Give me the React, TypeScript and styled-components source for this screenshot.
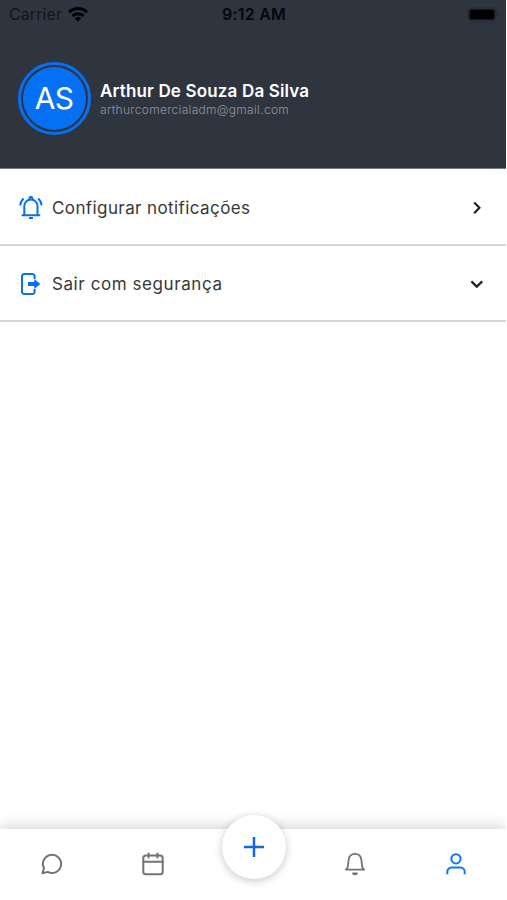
import React from 'react';
import styled, { createGlobalStyle } from 'styled-components';

const BLUE = '#0670f5';
const DARK = '#2e353f';

const GlobalStyle = createGlobalStyle`
  * { box-sizing: border-box; }
  body { margin: 0; background: #fff; font-family: Inter, sans-serif; }
  button { border: 0; padding: 0; background: none; font: inherit; cursor: pointer; }
  svg { display: block; flex: none; }
`;

const Screen = styled.div`
  width: 506px;
  height: 900px;
  display: flex;
  flex-direction: column;
  overflow: hidden;
  background: #fff;
`;

const Header = styled.header`
  height: 169px;
  flex: none;
  background: ${DARK};
  border-bottom: 1px solid #777b82;
`;

const StatusBar = styled.div`
  height: 30px;
  padding: 0 7px 2px 9px;
  display: grid;
  grid-template-columns: 1fr auto 1fr;
  align-items: center;
  color: #05070b;
  font-size: 16px;
  line-height: 20px;
`;

const Carrier = styled.div`
  display: flex;
  align-items: center;
  gap: 6px;
  letter-spacing: 0.1px;
  color: #11151c;
`;

const Clock = styled.div`
  font-weight: 600;
  letter-spacing: 0.2px;
`;

const Battery = styled.div`
  justify-self: end;
`;

const Profile = styled.div`
  display: flex;
  align-items: center;
  padding: 32px 18px 0;
  gap: 9px;
`;

const Avatar = styled.div`
  width: 73px;
  height: 73px;
  border: 3px solid ${BLUE};
  border-radius: 50%;
  padding: 2px;
  display: flex;
`;

const Initials = styled.div`
  flex: 1;
  border-radius: 50%;
  background: ${BLUE};
  color: #fff;
  font-size: 30px;
  letter-spacing: -0.6px;
  padding: 0 1px 2px 0;
  display: flex;
  align-items: center;
  justify-content: center;
`;

const Identity = styled.div`
  display: flex;
  flex-direction: column;
  padding-top: 3px;
  white-space: nowrap;
`;

const Name = styled.div`
  color: #fff;
  font-size: 17px;
  line-height: 20px;
  letter-spacing: 0.16px;
  font-weight: 600;
`;

const Email = styled.div`
  color: #92969e;
  font-size: 12px;
  line-height: 18px;
  letter-spacing: 0.3px;
  font-weight: 300;
`;

const List = styled.main`
  flex: 1;
  display: flex;
  flex-direction: column;
  padding-top: 1px;
`;

const Item = styled.button`
  height: 76px;
  flex: none;
  display: flex;
  align-items: center;
  padding: 1px 17px 0 19px;
  border-bottom: 2px solid #d1d7d9;
  color: #383838;
  text-align: left;
`;

const ItemLabel = styled.span<{ $tracking: number }>`
  flex: 1;
  margin-left: 9px;
  font-size: 17px;
  line-height: 24px;
  letter-spacing: ${({ $tracking }) => $tracking}px;
`;

const TabBar = styled.nav`
  height: 71px;
  flex: none;
  display: grid;
  grid-template-columns: repeat(5, 1fr);
  background: #fff;
  box-shadow: 0 -2px 14px rgba(0, 0, 0, 0.19);
`;

const Tab = styled.button<{ $active?: boolean }>`
  height: 70px;
  display: flex;
  align-items: center;
  justify-content: center;
  padding-left: 2px;
  color: ${({ $active }) => ($active ? '#1974e8' : '#737373')};
`;

const AddButton = styled.button`
  width: 64px;
  height: 64px;
  margin: -14px 0 0 2px;
  justify-self: center;
  border-radius: 50%;
  display: flex;
  align-items: center;
  justify-content: center;
  background: #fff;
  color: #1268dc;
  box-shadow: 0 2px 8px rgba(0, 0, 0, 0.22);
`;

const line = {
  fill: 'none',
  stroke: 'currentColor',
  strokeWidth: 2,
  strokeLinecap: 'round' as const,
  strokeLinejoin: 'round' as const,
};

const WifiIcon = () => (
  <svg width="20" height="15" viewBox="0 0 20 15" fill="none" stroke="#000" strokeWidth="3">
    <path d="M1.1 5.3a12.6 12.6 0 0 1 17.8 0" />
    <path d="M4.6 8.9a7.6 7.6 0 0 1 10.8 0" />
    <path d="M10 14.5 6.9 11.4a4.4 4.4 0 0 1 6.2 0Z" fill="#000" stroke="none" />
  </svg>
);

const BatteryIcon = () => (
  <svg width="32" height="15" viewBox="0 0 32 15">
    <rect x="1" y="1" width="28" height="13" rx="4" fill="none" stroke="#232830" strokeWidth="1.2" />
    <rect x="2.5" y="2.5" width="25" height="10" rx="2" fill="#000" />
    <path d="M30.3 5.3c1.4.7 1.4 3.7 0 4.4Z" fill="#20252d" />
  </svg>
);

const RingingBellIcon = () => (
  <svg width="24" height="24" viewBox="0 0 24 24" {...line} stroke={BLUE} strokeLinecap="butt" strokeLinejoin="miter">
    <path d="M2.6 19.2h18.6M5.3 19V10a6.6 6.6 0 0 1 13.2 0V19" />
    <path d="M10.5 3.3V2.3a1.4 1.4 0 0 1 2.8 0v1M9.9 22h4" />
    <path d="M4.6 2.4A10 10 0 0 0 1.2 9.4M19.2 2.4a10 10 0 0 1 3.4 7" />
  </svg>
);

const ExitIcon = () => (
  <svg width="24" height="24" viewBox="0 0 24 24">
    <path
      d="M15.6 7V4.2A2.2 2.2 0 0 0 13.4 2H5.2A2.2 2.2 0 0 0 3 4.2v15.6A2.2 2.2 0 0 0 5.2 22h8.2a2.2 2.2 0 0 0 2.2-2.2V17"
      fill="none"
      stroke={BLUE}
      strokeWidth="2"
    />
    <path d="M9 10h6.3V6.9l6 5.1-6 5.1V14H9Z" fill={BLUE} />
  </svg>
);

const Chevron = ({ down }: { down?: boolean }) => (
  <svg width="24" height="24" viewBox="0 0 24 24" fill="none" stroke="#222" strokeWidth="2.2">
    <path d={down ? 'm6.4 9.4 5.4 5.2 5.4-5.2' : 'm9.2 6.4 5.2 5.4-5.2 5.4'} />
  </svg>
);

const ChatIcon = () => (
  <svg width="24" height="24" viewBox="0 0 24 24" {...line}>
    <path d="M2.4 21.3 4 16.2a9.1 9.1 0 1 1 3.7 3.7Z" />
  </svg>
);

const CalendarIcon = () => (
  <svg width="24" height="24" viewBox="0 0 24 24" {...line}>
    <rect x="2.3" y="3.5" width="19.4" height="18.8" rx="2.5" />
    <path d="M2.3 9.7h19.4M7.6 1.4v4.2M16.4 1.4v4.2" />
  </svg>
);

const BellIcon = () => (
  <svg width="24" height="24" viewBox="0 0 24 24" {...line} strokeWidth="1.8">
    <path d="M2.9 17.6h18.2c-1.1-.7-1.7-1.7-1.9-3.1l-.8-6.4c-.5-4-2.7-6.2-6.4-6.2S6.100 4.100 5.600 8.100l-.8 6.400c-.2 1.400-.8 2.400-1.900 3.100Z" />
    <path d="M10 21.300h4a2.300 2.300 0 0 1-4 0Z" />
  </svg>
);

const UserIcon = () => (
  <svg width="24" height="24" viewBox="0 0 24 24" {...line} strokeLinecap="butt">
    <circle cx="12" cy="6.8" r="4.6" />
    <path d="M3.300 22.200v-2.400a4.400 4.400 0 0 1 4.400-4.400h8.600a4.400 4.400 0 0 1 4.400 4.400v2.400" />
  </svg>
);

const PlusIcon = () => (
  <svg width="24" height="24" viewBox="0 0 24 24" fill="none" stroke="currentColor" strokeWidth="2.5">
    <path d="M12 2v20M2 12h20" />
  </svg>
);

export default function App() {
  return (
    <>
      <GlobalStyle />
      <Screen>
        <Header>
          <StatusBar>
            <Carrier>Carrier <WifiIcon /></Carrier>
            <Clock>9:12 AM</Clock>
            <Battery><BatteryIcon /></Battery>
          </StatusBar>
          <Profile>
            <Avatar><Initials>AS</Initials></Avatar>
            <Identity>
              <Name>Arthur De Souza Da Silva</Name>
              <Email>arthurcomercialadm@gmail.com</Email>
            </Identity>
          </Profile>
        </Header>
        <List>
          <Item>
            <RingingBellIcon />
            <ItemLabel $tracking={0.4}>Configurar notificações</ItemLabel>
            <Chevron />
          </Item>
          <Item>
            <ExitIcon />
            <ItemLabel $tracking={0.58}>Sair com segurança</ItemLabel>
            <Chevron down />
          </Item>
        </List>
        <TabBar>
          <Tab aria-label="Mensagens"><ChatIcon /></Tab>
          <Tab aria-label="Agenda"><CalendarIcon /></Tab>
          <AddButton aria-label="Adicionar"><PlusIcon /></AddButton>
          <Tab aria-label="Alertas"><BellIcon /></Tab>
          <Tab aria-label="Perfil" $active><UserIcon /></Tab>
        </TabBar>
      </Screen>
    </>
  );
}
